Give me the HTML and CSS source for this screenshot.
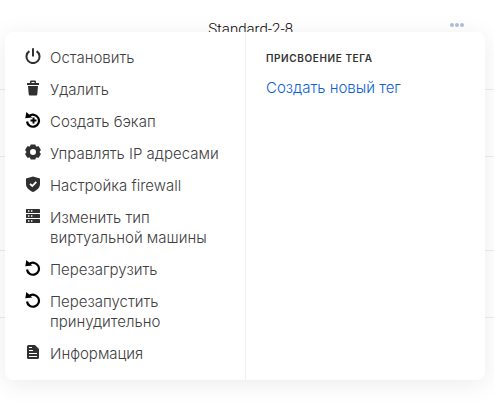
FILE: index.html
```html
<!DOCTYPE html>
<html lang="ru">
<head>
<meta charset="utf-8">
<title>Виртуальные машины</title>
<link rel="stylesheet" href="styles.css">
</head>
<body>
<svg class="sprite" aria-hidden="true">
  <symbol id="restart" viewBox="0 0 16 16">
    <path d="M4 4.200A6 6 0 1 1 2 9.500" fill="none" stroke="currentColor" stroke-width="2.200"/>
    <path d="M.3 6.300 1.300 0 7.300 5.600Z" fill="currentColor"/>
  </symbol>
</svg>
<main class="servers">
  <div class="server server-first">
    <span class="plan">Standard-2-8</span>
    <button class="more" type="button" aria-label="Действия">
      <svg viewBox="0 0 14 4" width="14" height="4"><circle cx="2" cy="2" r="2"/><circle cx="7" cy="2" r="2"/><circle cx="12" cy="2" r="2"/></svg>
    </button>
  </div>
  <div class="server"></div>
  <div class="server server-tall"></div>
  <div class="server"></div>

  <div class="menu">
    <ul class="actions">
      <li><button class="action" type="button">
        <svg class="icon" viewBox="0 0 16 16"><path d="M4.400 3.200a6.500 6.500 0 1 0 7.200 0M8 .2v8.300" fill="none" stroke="currentColor" stroke-width="2"/></svg>
        <span>Остановить</span></button></li>
      <li><button class="action" type="button">
        <svg class="icon" viewBox="0 0 16 16"><path d="M2 3h3V1.800Q5 .6 6.200.6h3.600Q11 .6 11 1.800V3h3v2H2ZM6.500 3h3V2h-3ZM3 6h10l-.7 8.200Q12.200 15.500 11 15.500H5Q3.800 15.500 3.700 14.200Z" fill="currentColor" fill-rule="evenodd"/></svg>
        <span>Удалить</span></button></li>
      <li><button class="action dark" type="button">
        <svg class="icon" viewBox="0 0 16 16"><use href="#restart"/><path d="M8.500 5.500v6M5.500 8.500h6" stroke="currentColor" stroke-width="2"/></svg>
        <span>Создать бэкап</span></button></li>
      <li><button class="action" type="button">
        <svg class="icon" viewBox="0 0 16 16"><path d="M5.700.4h4.600l.8 2.100 2.600-.3 2.200 3.800L14.500 8l1.400 2-2.200 3.800-2.600-.3-.8 2.100H5.700l-.8-2.100-2.600.3L.1 10l1.400-2L.1 6l2.200-3.800 2.600.3ZM8 5a3 3 0 1 0 0 6 3 3 0 0 0 0-6Z" fill="currentColor" fill-rule="evenodd"/></svg>
        <span>Управлять IP адресами</span></button></li>
      <li><button class="action" type="button">
        <svg class="icon" viewBox="0 0 16 16"><path d="M8 .5 15 2.500V8c0 4-3.600 6.500-7 8-3.400-1.500-7-4-7-8V2.500Z" fill="currentColor"/><path d="m5 7.800 2.300 2.200 4-4.200" fill="none" stroke="#fff" stroke-width="1.800"/></svg>
        <span>Настройка firewall</span></button></li>
      <li><button class="action" type="button">
        <svg class="icon" viewBox="0 0 16 16"><g fill="currentColor"><rect x="1" y="1" width="14" height="4" rx=".6"/><rect x="1" y="6" width="14" height="4" rx=".6"/><rect x="1" y="11" width="14" height="4" rx=".6"/></g><path d="M3 2.300h1.400v1.400H3ZM6 2.300h1.400v1.400H6ZM3 7.300h1.400v1.400H3ZM6 7.300h1.400v1.400H6ZM3 12.300h1.400v1.400H3ZM6 12.300h1.400v1.400H6Z" fill="#fff"/></svg>
        <span>Изменить тип виртуальной машины</span></button></li>
      <li><button class="action dark" type="button">
        <svg class="icon" viewBox="0 0 16 16"><use href="#restart"/></svg>
        <span>Перезагрузить</span></button></li>
      <li><button class="action dark" type="button">
        <svg class="icon" viewBox="0 0 16 16"><use href="#restart"/></svg>
        <span>Перезапустить принудительно</span></button></li>
      <li><button class="action" type="button">
        <svg class="icon" viewBox="0 0 16 16"><path d="M3.500 1H10l4 4v8.500q0 1.500-1.500 1.500h-9Q2 15 2 13.500v-11Q2 1 3.500 1Z" fill="currentColor"/><path d="M4 3.500h3M4 6.500h4M4 9.500h8M4 12.500h8" stroke="#fff" stroke-width="1"/></svg>
        <span>Информация</span></button></li>
    </ul>
    <section class="tags">
      <h2 class="tags-title">Присвоение тега</h2>
      <a class="tags-link" href="#new-tag">Создать новый тег</a>
    </section>
  </div>
</main>
</body>
</html>
```
FILE: styles.css
```css
* {
  box-sizing: border-box;
}

body {
  margin: 0;
  background: #fff;
  color: #404040;
  font: 300 15px/20px Inter, "Liberation Sans", sans-serif;
}

.sprite {
  position: absolute;
  width: 0;
  height: 0;
}

.servers {
  position: relative;
  min-height: 100vh;
}

.server {
  display: flex;
  align-items: flex-start;
  height: 67px;
  border-bottom: 1px solid #ebebf0;
}

.server-first {
  justify-content: flex-end;
  gap: 157px;
  height: 90px;
  padding: 19px 30px 0 0;
}

.server-tall {
  height: 94px;
}

.plan {
  color: #000;
  font-family: Roboto, "Liberation Sans", sans-serif;
}

.more {
  display: flex;
  padding: 4px 0;
  border: 0;
  background: none;
  fill: #b0c0dc;
}

.menu {
  position: absolute;
  top: 32px;
  right: 9px;
  left: 5px;
  display: grid;
  grid-template-columns: 1fr 1fr;
  border-radius: 8px;
  background: #fff;
  box-shadow: 0 4px 24px rgba(0, 0, 0, 0.08);
}

.actions {
  display: flex;
  flex-direction: column;
  gap: 12px;
  margin: 0;
  padding: 16px 20px;
  list-style: none;
}

.action {
  display: flex;
  gap: 9px;
  width: 100%;
  padding: 0;
  border: 0;
  background: none;
  color: inherit;
  font: inherit;
  text-align: left;
}

.icon {
  flex: none;
  width: 16px;
  height: 16px;
  color: #303030;
}

.dark .icon {
  color: #000;
}

.tags {
  padding: 16px 20px;
  border-left: 1px solid #f0f0f0;
}

.tags-title {
  margin: 0 0 10px;
  color: #333;
  font-size: 10px;
  font-weight: 600;
  letter-spacing: 0.06em;
  text-transform: uppercase;
}

.tags-link {
  color: #0b62d6;
  text-decoration: none;
}
```
